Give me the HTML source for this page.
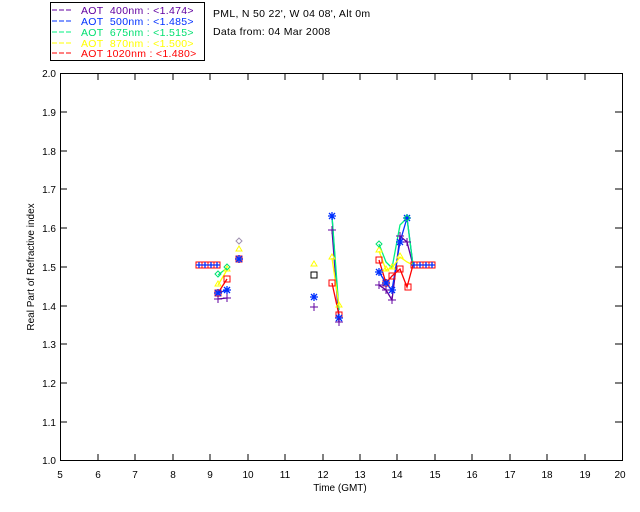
<!DOCTYPE html>
<html><head><style>
html,body{margin:0;padding:0;background:#fff;}
svg{display:block;font-family:"Liberation Sans","DejaVu Sans",sans-serif;}
</style></head><body>
<svg width="640" height="512" viewBox="0 0 640 512" xmlns="http://www.w3.org/2000/svg">
<rect width="640" height="512" fill="#fff"/>
<rect x="50.5" y="2.5" width="154" height="58" fill="none" stroke="#000"/>
<g font-size="10.5" letter-spacing="0.3">
<line x1="52" y1="10" x2="72" y2="10" stroke="#6000a0" stroke-dasharray="5,2"/>
<text x="81" y="14" fill="#6000a0">AOT&#160;&#160;400nm : &lt;1.474&gt;</text>
<line x1="52" y1="21" x2="72" y2="21" stroke="#0030ff" stroke-dasharray="5,2"/>
<text x="81" y="25" fill="#0030ff">AOT&#160;&#160;500nm : &lt;1.485&gt;</text>
<line x1="52" y1="32" x2="72" y2="32" stroke="#00f080" stroke-dasharray="5,2"/>
<text x="81" y="36" fill="#00e070">AOT&#160;&#160;675nm : &lt;1.515&gt;</text>
<line x1="52" y1="43" x2="72" y2="43" stroke="#ffff00" stroke-dasharray="5,2"/>
<text x="81" y="47" fill="#ffff00">AOT&#160;&#160;870nm : &lt;1.500&gt;</text>
<line x1="52" y1="53" x2="72" y2="53" stroke="#ff0000" stroke-dasharray="5,2"/>
<text x="81" y="57" fill="#ff0000">AOT 1020nm : &lt;1.480&gt;</text>
<text x="213" y="17" fill="#000">PML, N 50 22', W 04 08', Alt 0m</text>
<text x="213" y="35" fill="#000">Data from: 04 Mar 2008</text>
</g>
<rect x="60.5" y="73.5" width="562" height="387" fill="none" stroke="#000"/>
<g stroke="#000">
<path d="M98 461v-7M135 461v-7M173 461v-7M210 461v-7M248 461v-7M285 461v-7M323 461v-7M360 461v-7M397 461v-7M435 461v-7M472 461v-7M510 461v-7M547 461v-7M585 461v-7
M98 73v7M135 73v7M173 73v7M210 73v7M248 73v7M285 73v7M323 73v7M360 73v7M397 73v7M435 73v7M472 73v7M510 73v7M547 73v7M585 73v7
M60 112h7M60 151h7M60 189h7M60 228h7M60 267h7M60 306h7M60 344h7M60 383h7M60 422h7
M622 112h-7M622 151h-7M622 189h-7M622 228h-7M622 267h-7M622 306h-7M622 344h-7M622 383h-7M622 422h-7"/>
</g>
<g font-size="10" fill="#000" text-anchor="middle">
<text x="60" y="478">5</text><text x="98" y="478">6</text><text x="135" y="478">7</text><text x="173" y="478">8</text><text x="210" y="478">9</text><text x="248" y="478">10</text><text x="285" y="478">11</text><text x="323" y="478">12</text><text x="360" y="478">13</text><text x="397" y="478">14</text><text x="435" y="478">15</text><text x="472" y="478">16</text><text x="510" y="478">17</text><text x="547" y="478">18</text><text x="585" y="478">19</text><text x="620" y="478">20</text>
<text x="340" y="491">Time (GMT)</text>
</g>
<g font-size="10" fill="#000" text-anchor="end">
<text x="56" y="77">2.0</text><text x="56" y="116">1.9</text><text x="56" y="155">1.8</text><text x="56" y="193">1.7</text><text x="56" y="232">1.6</text><text x="56" y="271">1.5</text><text x="56" y="310">1.4</text><text x="56" y="348">1.3</text><text x="56" y="387">1.2</text><text x="56" y="426">1.1</text><text x="56" y="464">1.0</text>
</g>
<text transform="translate(34,267) rotate(-90)" font-size="10" text-anchor="middle">Real Part of Refractive index</text>
<g fill="none" stroke-width="1.3">
<polyline stroke="#6000a0" points="218,299 227,298"/>
<polyline stroke="#6000a0" points="332,230 339,322"/>
<polyline stroke="#6000a0" points="379,285 386,290 392,300 400,236 407,242 413,265"/>
<polyline stroke="#0030ff" points="218,293 227,290"/>
<polyline stroke="#0030ff" points="332,216 339,318"/>
<polyline stroke="#0030ff" points="379,272 386,283 392,290 400,242 407,218 413,265"/>
<polyline stroke="#00f080" points="218,275 227,268"/>
<polyline stroke="#00f080" points="332,216 339,310"/>
<polyline stroke="#00f080" points="379,244 386,262 392,268 400,225 407,218 413,265"/>
<polyline stroke="#ffff00" points="218,285 227,270"/>
<polyline stroke="#ffff00" points="332,258 339,306"/>
<polyline stroke="#ffff00" points="379,251 386,270 392,268 400,257 407,262 413,265"/>
<polyline stroke="#ff0000" points="218,293 227,279"/>
<polyline stroke="#ff0000" points="332,283 339,315"/>
<polyline stroke="#ff0000" points="379,260 386,283 392,276 400,269 407,287 413,265"/>
</g>
<g fill="none" stroke-width="1">
<g stroke="#ff0000">
<rect x="196" y="262" width="6" height="6"/><rect x="202" y="262" width="6" height="6"/><rect x="208" y="262" width="6" height="6"/><rect x="214" y="262" width="6" height="6"/>
<rect x="215" y="290" width="6" height="6"/><rect x="224" y="276" width="6" height="6"/><rect x="236" y="256" width="6" height="6"/>
<rect x="329" y="280" width="6" height="6"/><rect x="336" y="312" width="6" height="6"/>
<rect x="376" y="257" width="6" height="6"/><rect x="383" y="280" width="6" height="6"/><rect x="389" y="273" width="6" height="6"/><rect x="397" y="266" width="6" height="6"/><rect x="405" y="284" width="6" height="6"/>
<rect x="411" y="262" width="6" height="6"/><rect x="417" y="262" width="6" height="6"/><rect x="423" y="262" width="6" height="6"/><rect x="429" y="262" width="6" height="6"/>
</g>
<g stroke="#0030ff" stroke-width="1.3">
<path d="M196 265h6M199 262v6M202 265h6M205 262v6M208 265h6M211 262v6M214 265h6M217 262v6M411 265h6M414 262v6M417 265h6M420 262v6M423 265h6M426 262v6M429 265h6M432 262v6"/>
<g id="ast"></g>
<path d="M214 293h8M218 289v8M215 290l6 6M221 290l-6 6
M223 290h8M227 286v8M224 287l6 6M230 287l-6 6
M235 259h8M239 255v8M236 256l6 6M242 256l-6 6
M310 297h8M314 293v8M311 294l6 6M317 294l-6 6
M328 216h8M332 212v8M329 213l6 6M335 213l-6 6
M335 318h8M339 314v8M336 315l6 6M342 315l-6 6
M375 272h8M379 268v8M376 269l6 6M382 269l-6 6
M382 283h8M386 279v8M383 280l6 6M389 280l-6 6
M388 290h8M392 286v8M389 287l6 6M395 287l-6 6
M396 242h8M400 238v8M397 239l6 6M403 239l-6 6
M403 218h8M407 214v8M404 215l6 6M410 215l-6 6"/>
</g>
<g stroke="#6000a0">
<path d="M214 299h8M218 295v8M223 298h8M227 294v8M310 307h8M314 303v8M328 230h8M332 226v8M335 322h8M339 318v8M375 285h8M379 281v8M382 290h8M386 286v8M388 300h8M392 296v8M396 236h8M400 232v8M403 242h8M407 238v8"/>
</g>
<g stroke="#ffff00">
<path d="M218 281l3 5h-6z M227 266l3 5h-6z M239 246l3 5h-6z M314 261l3 5h-6z M332 254l3 5h-6z M339 302l3 5h-6z M379 247l3 5h-6z M386 266l3 5h-6z M392 264l3 5h-6z M400 253l3 5h-6z"/>
</g>
<g stroke="#00e070">
<path d="M218 271l3 3l-3 3l-3-3z M227 264l3 3l-3 3l-3-3z M379 241l3 3l-3 3l-3-3z M407 215l3 3l-3 3l-3-3z"/>
</g>
<path d="M239 238l3 3l-3 3l-3-3z" stroke="#a090b0"/>
<rect x="311" y="272" width="6" height="6" stroke="#000"/>
</g>
</svg>
</body></html>
